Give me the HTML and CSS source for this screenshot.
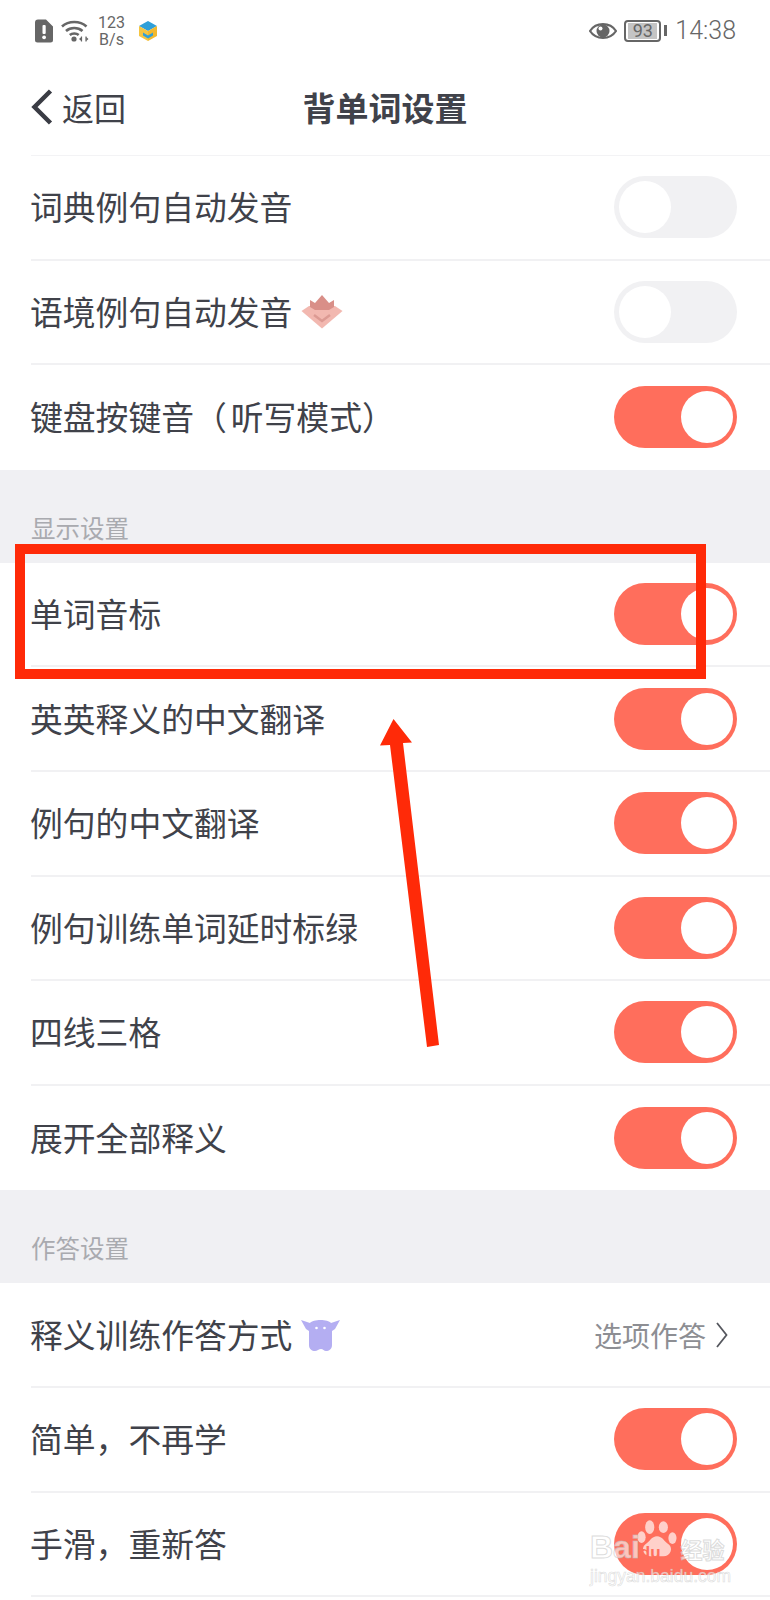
FILE: index.html
```html
<!DOCTYPE html>
<html lang="zh-CN">
<head>
  <meta charset="UTF-8">
  <title>背单词设置</title>
  <link rel="stylesheet" href="styles.css">
</head>
<body>
<div class="page">

  <div class="statusbar">
    <div class="status-left">
      <svg class="ic-alert" width="20" height="24" viewBox="0 0 20 24"><path d="M4 0.5h8l7 7V21a2.5 2.5 0 0 1-2.500 2.500H3.500A2.500 2.500 0 0 1 1 21V3.500A3 3 0 0 1 4 0.500z" fill="#666"/><rect x="8.500" y="6" width="3.200" height="9" rx="1" fill="#fff"/><circle cx="10.100" cy="18.300" r="1.900" fill="#fff"/></svg>
      <svg class="ic-wifi" width="28" height="24" viewBox="0 0 28 24" fill="none" stroke="#666" stroke-width="2.600"><path d="M1 7.500C7.500 1.500 19 1.500 25.500 7.500"/><path d="M5 12C9.500 8 17 8 21.500 12"/><path d="M8.800 16C11.200 14 15.300 14 17.700 16"/><circle cx="13" cy="20" r="2.600" fill="#666" stroke="none"/><path d="M20.500 17.500v5M25 17.500v5" stroke-width="1.200"/><path d="M20.300 18l-2.300 2 2.300 2zM25.200 18l2.300 2-2.300 2z" fill="#666" stroke="none"/></svg>
      <div class="speed"><span>123</span><span>B/s</span></div>
      <svg class="ic-cube" width="20" height="22" viewBox="0 0 20 22"><path d="M10 1l9 5-9 5-9-5z" fill="#2f9fd8"/><path d="M1 6l9 5v10l-9-5z" fill="#f5c542"/><path d="M19 6l-9 5v10l9-5z" fill="#f2b92f"/><path d="M5 12.500l5 3 5-3v3l-5 3-5-3z" fill="#2f9fd8"/></svg>
    </div>
    <div class="status-right">
      <svg class="ic-eye" width="28" height="20" viewBox="0 0 28 20"><path d="M1 10C7 0.800 21 0.800 27 10C21 19.200 7 19.200 1 10z" fill="#fff" stroke="#666" stroke-width="2.200"/><circle cx="14" cy="10" r="6.500" fill="#666"/><circle cx="11.500" cy="7.500" r="2" fill="#fff"/></svg>
      <div class="battery"><span class="battery-fill">93</span></div>
      <span class="battery-tip"></span>
      <span class="clock">14:38</span>
    </div>
  </div>

  <div class="navbar">
    <div class="nav-back">
      <svg width="22" height="36" viewBox="0 0 22 36" fill="none" stroke="#3a3c44" stroke-width="4.500"><path d="M19.500 2L3.500 18l16 16"/></svg>
      <span>返回</span>
    </div>
    <div class="nav-title">背单词设置</div>
    <div></div>
  </div>

  <div class="row">
    <span class="label">词典例句自动发音</span>
    <div class="toggle"><i></i></div>
  </div>
  <div class="row">
    <div class="label-wrap">
      <span class="label">语境例句自动发音</span>
      <svg width="42" height="34" viewBox="0 0 42 34"><path d="M0.500 16L8 11h26l7.500 5L21 33.500z" fill="#f2b8b0"/><path d="M9 12V5l5 3 7-8 7 8 5-3v7l-5 3H14z" fill="#d98f88"/><path d="M13 20l8 6 8-6" fill="none" stroke="#dc9a93" stroke-width="2.500"/></svg>
    </div>
    <div class="toggle"><i></i></div>
  </div>
  <div class="row row-last">
    <span class="label">键盘按键音<span class="paren">（</span>听写模式）</span>
    <div class="toggle on"><i></i></div>
  </div>

  <div class="section-title">显示设置</div>

  <div class="row">
    <span class="label">单词音标</span>
    <div class="toggle on"><i></i></div>
  </div>
  <div class="row">
    <span class="label">英英释义的中文翻译</span>
    <div class="toggle on"><i></i></div>
  </div>
  <div class="row">
    <span class="label">例句的中文翻译</span>
    <div class="toggle on"><i></i></div>
  </div>
  <div class="row">
    <span class="label">例句训练单词延时标绿</span>
    <div class="toggle on"><i></i></div>
  </div>
  <div class="row">
    <span class="label">四线三格</span>
    <div class="toggle on"><i></i></div>
  </div>
  <div class="row row-last">
    <span class="label">展开全部释义</span>
    <div class="toggle on"><i></i></div>
  </div>

  <div class="section-title">作答设置</div>

  <div class="row">
    <div class="label-wrap">
      <span class="label">释义训练作答方式</span>
      <svg width="40" height="33" viewBox="0 0 40 33" fill="#b4aef2"><path d="M0 2l9 3C12 1 27 1 30 5l9-3-5 9-3 2v14c0 4-3 6-6 6-2 0-3-2-5-2s-4 2-6 2c-3 0-6-2-6-6V13l-3-2z"/><circle cx="15.500" cy="10" r="1.300" fill="#fff"/><circle cx="23.500" cy="10" r="1.300" fill="#fff"/></svg>
    </div>
    <div class="row-value">
      <span>选项作答</span>
      <svg width="12" height="26" viewBox="0 0 12 26" fill="none" stroke="#55575e" stroke-width="1.800"><path d="M1 1l9.500 12L1 25"/></svg>
    </div>
  </div>
  <div class="row">
    <span class="label">简单，不再学</span>
    <div class="toggle on"><i></i></div>
  </div>
  <div class="row">
    <span class="label">手滑，重新答</span>
    <div class="toggle on"><i></i></div>
  </div>

  <!-- 截图上的红色标注 -->
  <div class="mark-box"></div>
  <svg class="mark-arrow" width="770" height="1600" viewBox="0 0 770 1600"><path d="M393.500 719L412 742.500 403 743 439 1045 427 1047 390 745 380 745.500z" fill="#ff2a08"/></svg>

  <!-- 水印 -->
  <div class="watermark">
    <svg class="wm-paw" width="40" height="42" viewBox="0 0 44 44" fill="#fff" fill-opacity=".68"><ellipse cx="14" cy="9" rx="5" ry="7.500"/><ellipse cx="29" cy="9" rx="5" ry="6.500"/><ellipse cx="5" cy="20" rx="4.500" ry="6.500"/><ellipse cx="39" cy="21" rx="4.500" ry="6.500"/><path d="M22 19c6 0 8 6 13 9 5 4 2 13-6 13H15C7 41 4 32 9 28c5-3 7-9 13-9z"/></svg>
    <div class="wm-top">
      <span class="wm-bai">Bai</span>
      <span class="wm-du">du</span>
      <span class="wm-jy">经验</span>
    </div>
    <div class="wm-url">jingyan.baidu.com</div>
  </div>

</div>
</body>
</html>
```

FILE: styles.css
```css
* {
  box-sizing: border-box;
}

html, body {
  margin: 0;
  padding: 0;
  background-color: #fff;
}

body {
  font-family: "Noto Sans CJK SC", "Noto Sans", sans-serif;
  color: #40424a;
  text-spacing-trim: space-all;
}

.page {
  position: relative;
  width: 770px;
  height: 1600px;
  overflow: hidden;
}

/* status bar */
.statusbar {
  display: flex;
  justify-content: space-between;
  align-items: center;
  height: 61px;
  padding: 0 34px;
  color: #666;
  font-family: Roboto, sans-serif;
}

.status-left, .status-right {
  display: flex;
  align-items: center;
}

.ic-wifi {
  margin-left: 7px;
}

.speed {
  display: flex;
  flex-direction: column;
  align-items: center;
  margin-left: 9px;
  font-size: 16px;
  line-height: 17px;
}

.ic-cube {
  margin-left: 13px;
}

.ic-eye {
  margin-right: 7px;
}

.battery {
  display: flex;
  width: 37px;
  height: 22px;
  padding: 1px 2px;
  border: 2px solid #666;
  border-radius: 4px;
}

.battery-fill {
  flex: 1;
  background-color: #c4c4c4;
  font-size: 18px;
  line-height: 16px;
  text-align: center;
}

.battery-tip {
  width: 3px;
  height: 11px;
  margin-left: 3px;
  background-color: #666;
}

.clock {
  margin-left: 8px;
  font-size: 25px;
  font-weight: 300;
}

/* nav */
.navbar {
  display: grid;
  grid-template-columns: 1fr auto 1fr;
  align-items: center;
  height: 95px;
  margin-left: 31px;
  padding-bottom: 2px;
  padding-right: 31px;
  border-bottom: 1px solid #f3f3f5;
}

.nav-back {
  display: flex;
  align-items: center;
  gap: 9px;
  font-size: 32px;
}

.nav-title {
  font-size: 33px;
  font-weight: 700;
}

/* rows */
.row {
  display: flex;
  justify-content: space-between;
  align-items: center;
  height: 104.600px;
  margin-left: 31px;
  padding-right: 33px;
  border-bottom: 2px solid #f1f1f3;
}

.row-last {
  border-bottom: 0;
}

.label {
  margin-left: -1px;
  padding-bottom: 2px;
  font-size: 32.800px;
  line-height: 44px;
}

.paren {
  letter-spacing: 4px;
}

.label-wrap {
  display: flex;
  align-items: center;
  gap: 9px;
}

.row-value {
  display: flex;
  align-items: center;
  gap: 10px;
  margin-right: 9px;
  font-size: 28px;
  color: #8d8e93;
}

.section-title {
  height: 93px;
  padding: 40px 0 0 31px;
  background-color: #f0f0f3;
  font-size: 24.500px;
  line-height: 36px;
  color: #a9aaaf;
}

/* switch */
.toggle {
  display: flex;
  align-items: center;
  width: 123px;
  height: 62px;
  padding: 0 4.500px;
  border-radius: 31px;
  background-color: #f1f1f3;
}

.toggle i {
  width: 52px;
  height: 52px;
  border-radius: 50%;
  background-color: #fff;
}

.toggle.on {
  justify-content: flex-end;
  background-color: #ff6e5c;
}

/* annotation */
.mark-box {
  position: absolute;
  left: 15px;
  top: 544px;
  width: 691px;
  height: 135px;
  border: 10.500px solid #ff2a08;
}

.mark-arrow {
  position: absolute;
  left: 0;
  top: 0;
}

/* watermark */
.watermark {
  position: absolute;
  left: 590px;
  top: 1518px;
  width: 150px;
  height: 70px;
  color: rgba(255, 255, 255, .6);
}

.wm-top {
  position: relative;
  display: flex;
  align-items: baseline;
  height: 48px;
  font-family: "Liberation Sans", sans-serif;
  font-weight: 700;
  -webkit-text-stroke: 1px rgba(190, 190, 190, .55);
}

.wm-bai {
  font-size: 32px;
  line-height: 58px;
}

.wm-du {
  color: #ff6e5c;
  font-size: 17px;
  -webkit-text-stroke: 0;
}

.wm-jy {
  margin-left: 20px;
  font-family: "Noto Sans CJK SC", sans-serif;
  font-size: 22px;
}

.wm-paw {
  position: absolute;
  left: 47px;
  top: 0;
}

.wm-url {
  font-family: "Liberation Sans", sans-serif;
  font-size: 17.500px;
  line-height: 20px;
  white-space: nowrap;
  -webkit-text-stroke: .6px rgba(190, 190, 190, .55);
}
```
